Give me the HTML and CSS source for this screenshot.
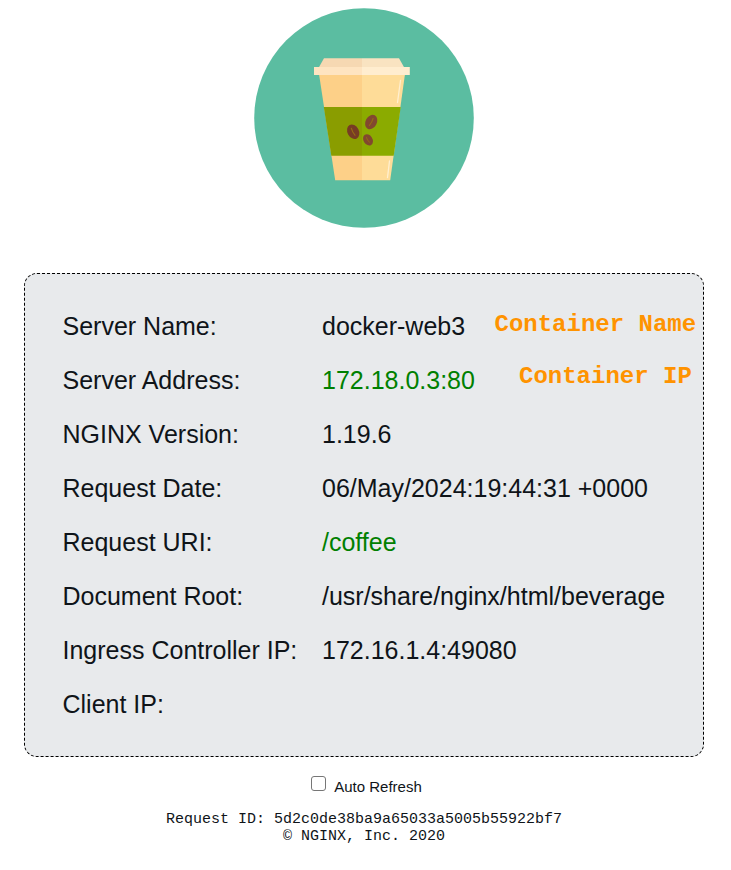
FILE: index.html
```html
<!DOCTYPE html>
<html lang="en">
<head>
<meta charset="utf-8">
<title>Coffee</title>
<link rel="stylesheet" href="styles.css">
</head>
<body>
<main class="page">
  <svg class="logo" viewBox="0 0 220 220" role="img" aria-label="Coffee cup">
    <circle cx="110" cy="110" r="109.8" fill="#5bbda1"/>
    <path d="M65 66H108V172.200H81.200Z" fill="#fdd088"/>
    <path d="M108 66H151L136.200 172.200H108Z" fill="#fedc98"/>
    <path d="M69.800 99H108V147.700H77.300Z" fill="#8a9d00"/>
    <path d="M108 99H146.700L139.700 147.700H108Z" fill="#8bab00"/>
    <path d="M70 50.300H108V60H64.500Z" fill="#f6d8b2"/>
    <path d="M108 50.300H145L150.500 60H108Z" fill="#f9e3c1"/>
    <path d="M60 59H108V67H60Z" fill="#fee4c1"/>
    <path d="M108 59H155.800V67H108Z" fill="#ffedcf"/>
    <path d="M146.500 72.500L143.500 94.500M135.500 153L133.500 169.500" fill="none" stroke="#ffefcf" stroke-width="1.300" stroke-linecap="round"/>
    <g transform="translate(99.200 123.700) rotate(-28)">
      <ellipse rx="5.700" ry="7.600" fill="#773c23"/>
      <path d="M0-4.300Q-1 0 0 4.500" fill="none" stroke="#966c14" stroke-width="1.100"/>
    </g>
    <g transform="translate(117.200 114) rotate(28)">
      <ellipse rx="5.600" ry="7.600" fill="#82482f"/>
      <path d="M0-4.300Q1 0 0 4.500" fill="none" stroke="#966c14" stroke-width="1.100"/>
    </g>
    <g transform="translate(114 131.800) rotate(-32)">
      <ellipse rx="4.500" ry="6" fill="#82482f"/>
      <path d="M0-3.200Q-1 0 0 3.200" fill="none" stroke="#966c14" stroke-width=".9"/>
    </g>
  </svg>

  <section class="info">
    <dl class="rows">
      <dt>Server Name:</dt><dd>docker-web3</dd>
      <dt>Server Address:</dt><dd class="green">172.18.0.3:80</dd>
      <dt>NGINX Version:</dt><dd>1.19.6</dd>
      <dt>Request Date:</dt><dd>06/May/2024:19:44:31 +0000</dd>
      <dt>Request URI:</dt><dd class="green">/coffee</dd>
      <dt>Document Root:</dt><dd>/usr/share/nginx/html/beverage</dd>
      <dt>Ingress Controller IP:</dt><dd>172.16.1.4:49080</dd>
      <dt>Client IP:</dt><dd></dd>
    </dl>
    <span class="note note-name">Container Name</span>
    <span class="note note-ip">Container IP</span>
  </section>

  <label class="refresh"><input class="check" type="checkbox">Auto Refresh</label>

  <footer class="footer">
    <div>Request ID: 5d2c0de38ba9a65033a5005b55922bf7</div>
    <div>© NGINX, Inc. 2020</div>
  </footer>
</main>
</body>
</html>
```
FILE: styles.css
```css
body {
  margin: 0;
  background: #fff;
  color: #0f1419;
  font-family: "Liberation Sans", Arial, sans-serif;
}

.page {
  display: flex;
  flex-direction: column;
  align-items: center;
  width: 680px;
  margin-left: 24px;
  padding-top: 8px;
}

.logo {
  display: block;
  width: 220px;
  height: 220px;
}

.info {
  position: relative;
  box-sizing: border-box;
  width: 680px;
  height: 484px;
  margin-top: 45px;
  padding: 25px 0 0 37.5px;
  border: 1px dashed #000;
  border-radius: 13px;
  background: #e8eaec;
}

.rows {
  display: grid;
  grid-template-columns: 259.5px 1fr;
  grid-auto-rows: 54px;
  margin: 0;
  font-size: 25px;
  line-height: 54px;
  white-space: nowrap;
}

.rows dd {
  margin: 0;
}

.rows .green {
  color: #008000;
}

.note {
  position: absolute;
  color: #ff9300;
  font: bold 24px/28px "Liberation Mono", "Courier New", monospace;
  white-space: nowrap;
}

.note-name {
  top: 37px;
  left: 469.5px;
}

.note-ip {
  top: 89px;
  left: 494px;
}

.refresh {
  display: flex;
  align-items: flex-start;
  gap: 8px;
  margin-top: 19px;
  padding-left: 5px;
  font-size: 15px;
  line-height: 22px;
}

.check {
  appearance: none;
  box-sizing: border-box;
  width: 15px;
  height: 15px;
  margin: 0;
  border: 1px solid #767676;
  border-radius: 3px;
  background: #fff;
}

.footer {
  margin-top: 13px;
  font: 15px/17px "Liberation Mono", "Courier New", monospace;
  text-align: center;
}
```
